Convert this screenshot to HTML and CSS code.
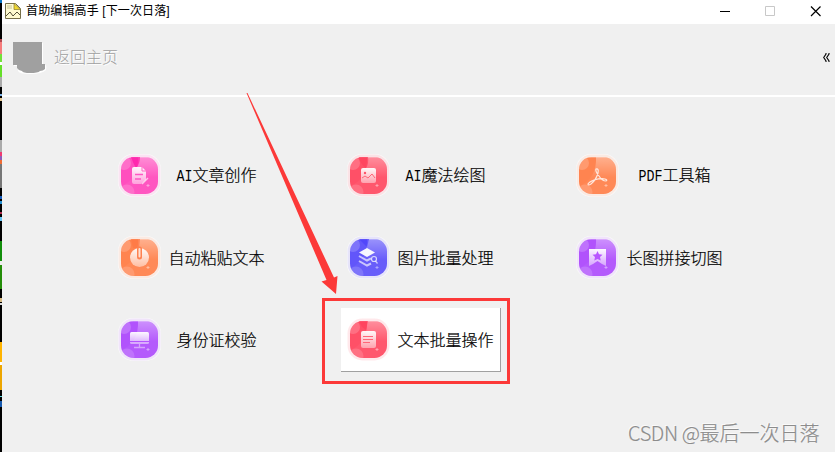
FILE: index.html
```html
<!DOCTYPE html>
<html lang="zh-CN">
<head>
<meta charset="utf-8">
<title>首助编辑高手</title>
<link rel="stylesheet" href="styles.css">
</head>
<body>
<svg class="defs" width="0" height="0" aria-hidden="true">
  <defs>
    <linearGradient id="shine" x1="0" y1="0" x2="0" y2="1"><stop offset="0" stop-color="#fff" stop-opacity=".36"/><stop offset=".55" stop-color="#fff" stop-opacity=".04"/><stop offset="1" stop-color="#fff" stop-opacity=".04"/></linearGradient>
    <linearGradient id="glyph" x1="0" y1="0" x2="0" y2="1"><stop offset="0" stop-color="#fff" stop-opacity=".95"/><stop offset="1" stop-color="#fff" stop-opacity=".45"/></linearGradient>
    <clipPath id="tileclip"><rect x="3" y="3" width="37" height="37" rx="12.5"/></clipPath>
    <g id="tile">
      <rect width="43" height="43" rx="15" fill="#fff" opacity=".65"/>
      <rect x=".5" y=".5" width="42" height="42" rx="15" fill="currentColor" opacity=".13"/>
      <rect x="3" y="3" width="37" height="37" rx="12.5" fill="currentColor"/>
      <g clip-path="url(#tileclip)">
        <path d="M20 3H40V40H3V32Q21 25 20 3" fill="url(#shine)"/>
        <circle cx="6" cy="9" r="7" fill="#fff" opacity=".18"/>
        <circle cx="9" cy="38" r="7.5" fill="#fff" opacity=".15"/>
        <path d="M3 3.5H40" stroke="#fff" opacity=".25"/>
      </g>
      <path d="M28.5 31.500h3M30 30v3" stroke="#fff" opacity=".45"/>
    </g>
  </defs>
</svg>
<div class="screen">
  <div class="edge"></div>
  <main class="window">
    <header class="titlebar">
      <svg class="appicon" width="16" height="16" viewBox="0 0 16 16"><path d="M.5.5h10l5 5v10H.5z" fill="#fffbd0" stroke="#77704a"/><path d="M9 .5l6.500 6H9z" fill="#f1d92e" stroke="#88782c" stroke-width=".7"/><path d="M2 3h5M2 5h5" stroke="#c5c198"/><path d="M1 13l4-4 3 4 4-4 3 3" fill="none" stroke="#555039"/></svg>
      <span class="title">首助编辑高手 [下一次日落]</span>
      <svg class="controls" width="110" height="24" viewBox="0 0 110 24"><path d="M0 11.500h10" stroke="#000"/><path d="M45.500 6.500h9v9h-9z" fill="none" stroke="#c8c8c8"/><path d="M91 6.500l9.500 9.500M100.500 6.500L91 16" stroke="#000" stroke-width="1.200"/></svg>
    </header>
    <nav class="toolbar">
      <svg class="homeicon" width="34" height="33" viewBox="0 0 34 33"><path d="M1 1h29v22h2q2 0 1 5-4 4-16 4Q6 32 5 29V24H1z" fill="#fff"/><path d="M0 0h29v22h3v5q-2 2-5 2-2 2-10 2-7 0-8-2-3 0-5-3V23H0z" fill="#a0a0a0"/></svg>
      <span class="back">返回主页</span>
      <svg class="collapse" width="7" height="9" viewBox="0 0 7 9"><path d="M3 0v1L.7 4.500 3 8v1M6 0v1L3.700 4.500 6 8v1" fill="none" stroke="#000" stroke-width="1.100"/></svg>
    </nav>
    <section class="grid">
      <div class="tool"><svg class="icon pink" viewBox="0 0 43 43"><use href="#tile"/><path d="M13 3h9q0 7-4 11-3-5-5-11" fill="#ff19a6" opacity=".7"/><path d="M16 13h8l4 4v9l-5 4h-7q-2 0-2-2V15q0-2 2-2z" fill="url(#glyph)"/><path d="M24 13v4h4" fill="none" stroke="#ff66c2"/><path d="M17 20.500h8M17 25h6" stroke="#ff56c4" stroke-width="1.500"/><path d="M24 30l6-6" stroke="#fff" stroke-width="1.500" opacity=".65"/></svg><span class="label"><span class="latin">AI</span>文章创作</span></div>
      <div class="tool"><svg class="icon red" viewBox="0 0 43 43"><use href="#tile"/><path d="M12 3h9q1 7-2 11-6-4-7-11" fill="#ff405c" opacity=".7"/><rect x="14" y="14" width="15" height="15" rx="2" fill="url(#glyph)"/><circle cx="18" cy="19" r="1.200" fill="#ff5268"/><path d="M15 24l3-2 3 2 4-4 3 4" fill="none" stroke="#ff6678" stroke-width="1"/></svg><span class="label"><span class="latin">AI</span>魔法绘图</span></div>
      <div class="tool"><svg class="icon orange" viewBox="0 0 43 43"><use href="#tile"/><path d="M20 15q3-1 2 4-2 7-7 11-3 2-3 0 1-2 6-4 7-2 11-1 3 1 1 2-4 0-7-5-4-5-3-7z" fill="none" stroke="#fff" stroke-width="1.200" opacity=".8"/></svg><span class="label"><span class="latin">PDF</span>工具箱</span></div>
      <div class="tool"><svg class="icon orange" viewBox="0 0 43 43"><use href="#tile"/><path d="M13 3h9l-1 9h-6z" fill="#ff7843" opacity=".7"/><circle cx="21.500" cy="21.500" r="9.500" fill="url(#glyph)"/><path d="M21.500 13v8" stroke="#ff8150" stroke-width="5" stroke-linecap="round"/><path d="M21.500 13v7.500" stroke="#ffe1d2" stroke-width="2" stroke-linecap="round"/></svg><span class="label">自动粘贴文本</span></div>
      <div class="tool"><svg class="icon blue" viewBox="0 0 43 43"><use href="#tile"/><path d="M12 3h10l-2 8z" fill="#4c40fa" opacity=".7"/><path d="M20 12l8 4.500-8 4.500-8-4.500z" fill="#fff" opacity=".95"/><path d="M12 20l8 4.500 4-2.200M12 25l8 4.500 4-2" fill="none" stroke="#fff" stroke-width="2" opacity=".65"/><circle cx="27" cy="23" r="2.500" fill="none" stroke="#fff" stroke-width="1.200" opacity=".75"/><path d="M28.500 25l2 2.500" stroke="#fff" stroke-width="1.300" opacity=".65"/></svg><span class="label">图片批量处理</span></div>
      <div class="tool"><svg class="icon purple" viewBox="0 0 43 43"><use href="#tile"/><path d="M13 13h17v17l-4-2-4.500-3-4.500 3-4 2z" fill="url(#glyph)"/><path d="M21.500 15l1.500 3.200 3.500.5-2.500 2.400.7 3.500-3.200-1.700-3.200 1.700.7-3.500-2.500-2.400 3.500-.5z" fill="#b856ff"/></svg><span class="label">长图拼接切图</span></div>
      <div class="tool"><svg class="icon purple" viewBox="0 0 43 43"><use href="#tile"/><rect x="12" y="14" width="19" height="12" rx="1.500" fill="url(#glyph)"/><path d="M12 23.500h19" stroke="#b553ff"/><path d="M21.500 26v3M16 29.500h11" stroke="#fff" stroke-width="1.300" opacity=".45"/></svg><span class="label">身份证校验</span></div>
      <div class="tool active"><svg class="icon red" viewBox="0 0 43 43"><use href="#tile"/><path d="M12 3h9l-2 9-4-3z" fill="#ff405c" opacity=".7"/><rect x="14" y="13" width="15" height="17" rx="2" fill="url(#glyph)"/><path d="M16 18.500h10M16 21.500h10M16 24.500h7" stroke="#ff6678" stroke-width="1.200"/></svg><span class="label">文本批量操作</span></div>
    </section>
  </main>
  <svg class="annotation" width="835" height="452" viewBox="0 0 835 452"><path d="M246.500 93h1L334 277.500l3.500-1.500-1.500 18-14.500-12.500 5-1.500z" fill="#fc3938"/><rect x="323.500" y="299.500" width="185" height="83" fill="none" stroke="#fc3938" stroke-width="3"/></svg>
  <div class="watermark"><span class="brand">CSDN @</span>最后一次日落</div>
</div>
</body>
</html>
```

FILE: styles.css
```css
body { margin: 0; }
.defs { position: absolute; }
.screen {
  position: relative;
  display: flex;
  width: 835px;
  height: 452px;
  overflow: hidden;
  background: #f0f0f0;
  color: #000;
  font-family: "Liberation Sans", "Noto Sans CJK SC", sans-serif;
}
.edge {
  width: 2px;
  background: linear-gradient(#0878c9 0 3px, #000 3px 39px, #b34950 39px 42px, #f67b7b 42px 54px, #72e039 54px 62px, #fff 62px 65px, #65df28 65px 77px, #aaa 77px 87px, #000 87px 94px, #7db4e9 94px 96px, #000 96px 98px, #e6c994 98px 101px, #000 101px 140px, #aaa 140px 152px, #ef3a70 152px 156px, #8c5db8 156px 160px, #ef6c35 160px 164px, #777 164px 188px, #000 188px 196px, #145abb 196px 199px, #000 199px 201px, #248ed0 201px 204px, #000 204px 212px, #b32e50 212px 214px, #000 214px 217px, #68c5f4 217px 221px, #000 221px 241px, #128e0b 241px 261px, #eee 261px 265px, #248d09 265px 289px, #000 289px 298px, #d7ba83 298px 302px, #000 302px 303px, #dedede 303px 305px, #000 305px 342px, #ffb400 342px 362px, #fff 362px 365px, #eda600 365px 390px, #000 390px 396px, #5bd6df 396px 397px, #000 397px 401px, #1759ae 401px 407px, #000 407px);
}
.window { width: 833px; }
.titlebar {
  display: flex;
  align-items: center;
  height: 24px;
  padding-left: 3px;
  background: #fff;
}
.appicon { margin-top: -2px; }
.title { margin: -2px auto 0 5px; font-size: 12px; line-height: 20px; letter-spacing: .13px; white-space: pre; }
.controls { margin-right: 5px; }
.toolbar {
  display: flex;
  align-items: center;
  box-sizing: border-box;
  height: 73px;
  padding: 0 5px 4px 11px;
  border-bottom: 2px solid #fff;
}
.homeicon { margin-top: 2px; }
.back {
  margin: 0 auto 0 7px;
  color: #a0a0a0;
  font-size: 16px;
  font-weight: 300;
  line-height: 20px;
  text-shadow: 1px 1px #fff;
}
.grid {
  display: grid;
  grid-template-columns: repeat(3, 160px);
  grid-auto-rows: 64px;
  gap: 18px 69px;
  padding: 47px 0 0 110px;
}
.tool {
  display: flex;
  align-items: center;
  box-sizing: border-box;
  padding-left: 6px;
  border: solid transparent;
  border-width: 0 2px 1px 0;
}
.active { background: #fff; border-color: #a0a0a0; border-right-width: 1px; }
.icon { flex: none; width: 43px; height: 43px; }
.label {
  width: 111px;
  flex: none;
  padding-bottom: 1px;
  text-align: center;
  font-family: "Noto Sans CJK SC", sans-serif;
  font-size: 16px;
  font-weight: 300;
  line-height: 20px;
  white-space: nowrap;
  -webkit-text-stroke: .2px #000;
}
.latin {
  display: inline-block;
  font-family: "Liberation Mono", monospace;
  font-size: 13.333px;
  line-height: 16px;
  -webkit-text-stroke: 0;
  transform: scaleY(1.25);
  transform-origin: 50% 75%;
}
.pink { color: #ff4fbe; }
.red { color: #ff5067; }
.orange { color: #ff8450; }
.blue { color: #6256fa; }
.purple { color: #b153fc; }
.annotation { position: absolute; left: 0; top: 0; }
.watermark {
  position: absolute;
  left: 628px;
  top: 419px;
  color: #8c8c8c;
  font-family: "Noto Sans CJK SC", sans-serif;
  font-size: 20px;
  line-height: 28px;
  font-weight: 300;
  white-space: nowrap;
  text-shadow: -1px -1px #fafafa;
  -webkit-text-stroke: .2px #8c8c8c;
}
.brand { letter-spacing: -.4px; }
```
